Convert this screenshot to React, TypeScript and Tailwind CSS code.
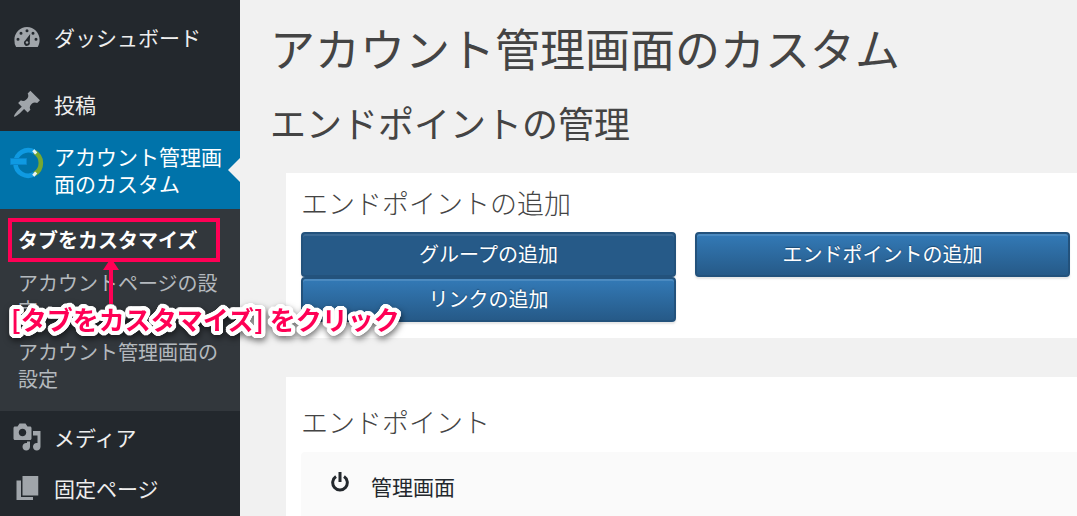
import type { ReactNode } from "react";

function DashboardIcon() {
  return (
    <svg viewBox="0 0 26 20" className="h-5 w-[26px]" aria-hidden="true">
      <path
        fill="#a0a5aa"
        fillRule="evenodd"
        d="M2.1 20A12.6 12.6 0 0 1 .4 13C.4 5.8 6 0 13 0s12.600 5.800 12.600 13c0 2.600-.7 5-1.900 7zM13 2.200a1.500 1.500 0 1 0 0 3 1.500 1.500 0 0 0 0-3zM7 4.700a1.500 1.500 0 1 0 0 3 1.500 1.500 0 0 0 0-3zm12 0a1.500 1.500 0 1 0 0 3 1.500 1.500 0 0 0 0-3zM4 10.800a1.500 1.500 0 1 0 0 3 1.500 1.500 0 0 0 0-3zm18 0a1.500 1.500 0 1 0 0 3 1.500 1.500 0 0 0 0-3zM16.200 7l-5 6.600a2.900 2.900 0 1 0 4.500 1.400z"
      />
      <circle cx="13" cy="15.500" r="1.300" fill="#a0a5aa" />
    </svg>
  );
}

function PinIcon() {
  return (
    <svg viewBox="0 0 20 20" className="size-[30px]" aria-hidden="true">
      <path
        fill="#a0a5aa"
        d="M10.440 3.020l1.820-1.820 6.360 6.350-1.830 1.820c-1.050-.68-2.480-.57-3.410.36l-.75.750c-.92.930-1.040 2.350-.35 3.410l-1.830 1.820-2.410-2.410-2.800 2.790c-.42.420-3.380 2.710-3.800 2.290s1.860-3.390 2.280-3.810l2.790-2.790L4.100 9.360l1.830-1.820c1.050.69 2.480.57 3.400-.36l.75-.75c.93-.92 1.050-2.350.36-3.410z"
      />
    </svg>
  );
}

function AccountIcon() {
  return (
    <svg viewBox="0 0 36 40" className="h-10 w-9" fill="none" aria-hidden="true">
      <path d="M25.500 9A12.700 12.700 0 1 0 25.500 31" stroke="#0f9ae2" strokeWidth="4.600" />
      <path d="M25.500 9A12.700 12.700 0 0 1 25.500 31" stroke="#76a832" strokeWidth="4.600" />
      <path d="M24.300 7.300l2.900 3.200M24.300 32.700l2.900-3.200" stroke="#eaf4f4" strokeWidth="3" />
      <path d="M1.500 15.500h16v6h-16z" fill="#0f9ae2" stroke="#0a86cc" />
    </svg>
  );
}

function MediaIcon() {
  return (
    <svg viewBox="0 0 20 20" className="size-[30px]" aria-hidden="true">
      <path
        fill="#a0a5aa"
        d="M13 11V4c0-.55-.45-1-1-1h-1.670L9 1H5L3.670 3H2c-.55 0-1 .45-1 1v7c0 .55.45 1 1 1h10c.55 0 1-.45 1-1zM7 4.500c1.380 0 2.500 1.120 2.500 2.500S8.380 9.500 7 9.500 4.500 8.380 4.500 7 5.620 4.500 7 4.500zM14 6h5v10.500c0 1.380-1.120 2.500-2.500 2.500S14 17.880 14 16.500s1.120-2.500 2.500-2.500c.17 0 .34.020.5.050V9h-3V6zm-4 8.050V13h2v3.500c0 1.380-1.120 2.500-2.500 2.500S7 17.880 7 16.500 8.120 14 9.500 14c.17 0 .34.020.5.050z"
      />
    </svg>
  );
}

function PagesIcon() {
  return (
    <svg viewBox="0 0 20 20" className="size-[30px]" aria-hidden="true">
      <path fill="#a0a5aa" d="M7 15V2h10.500v13H7zm-1 1h8v2H3V5h3v11z" />
    </svg>
  );
}

function MenuItem({
  icon,
  label,
  className,
}: {
  icon: ReactNode;
  label: string;
  className: string;
}) {
  return (
    <a href="#" className={`flex items-center text-[21px] leading-7 text-[#eee] ${className}`}>
      <span className="flex w-[54px] shrink-0 justify-center">{icon}</span>
      {label}
    </a>
  );
}

function AddButton({ label, active }: { label: string; active?: boolean }) {
  return (
    <button
      type="button"
      className={`h-[45px] rounded border-2 border-[#23527c] pb-px text-xl text-white [text-shadow:0_-1px_1px_#1d4a72] ${
        active
          ? "bg-[#265a88] shadow-[inset_0_2px_0_#3c6a94,0_2px_2px_#0000001a]"
          : "bg-linear-to-b from-[#337ab7] to-[#265a88] shadow-[inset_0_2px_0_#4b8ac0,0_2px_2px_#0000001a]"
      }`}
    >
      {label}
    </button>
  );
}

const subItems = ["アカウントページの設定", "アカウント管理画面の設定"];

function Sidebar() {
  return (
    <nav className="w-60 shrink-0 bg-[#23282d]">
      <MenuItem icon={<DashboardIcon />} label="ダッシュボード" className="h-[74px]" />
      <MenuItem icon={<PinIcon />} label="投稿" className="h-[57px] pt-[3px]" />
      <div className="relative">
        <a
          href="#"
          className="flex h-[78px] bg-[#0073aa] pt-3 text-[21px] leading-[27px] text-white"
        >
          <span className="flex w-[54px] shrink-0 justify-center">
            <AccountIcon />
          </span>
          <span className="w-[172px]">アカウント管理画面のカスタム</span>
        </a>
        <span className="absolute top-[27px] right-0 border-y-12 border-r-12 border-y-transparent border-r-[#f1f1f1]" />
      </div>
      <div className="bg-[#32373c] px-[18px] pt-[9px] pb-[19px] text-[20px] leading-[27px] text-[#b4b9be]">
        <div className="relative -mb-2 -ml-[10px] flex h-11 w-[212px] items-center border-4 border-[#ff0055] px-[6px] pb-px">
          <a href="#" className="font-bold whitespace-nowrap text-white">
            タブをカスタマイズ
          </a>
          <Annotation />
        </div>
        {subItems.map((item) => (
          <a key={item} href="#" className="mt-[15px] block break-all">
            {item}
          </a>
        ))}
      </div>
      <MenuItem icon={<MediaIcon />} label="メディア" className="h-[51px]" />
      <MenuItem icon={<PagesIcon />} label="固定ページ" className="h-[51px]" />
    </nav>
  );
}

// Round white outline, built from shadows set on a circle round the glyphs
const outline = Array.from({ length: 32 }, (_, i) => {
  const angle = (i * Math.PI) / 16;
  return `${(4 * Math.cos(angle)).toFixed(2)}px ${(4 * Math.sin(angle)).toFixed(2)}px 0 #fff`;
})
  .concat("2px 0 0 #fff", "-2px 0 0 #fff", "0 2px 0 #fff", "0 -2px 0 #fff")
  .join(", ");

// Callout under the highlighted submenu entry
function Annotation() {
  return (
    <div className="absolute top-full -left-px z-10 text-[#ff0055]">
      <svg viewBox="0 0 16 46" className="ml-[92px] h-[46px] w-4" aria-hidden="true">
        <path fill="currentColor" d="M8 0l8 12h-6v34H6V12H0z" />
      </svg>
      <p
        className="-mt-1 text-[26px] leading-[38px] font-bold whitespace-nowrap drop-shadow-[1px_3px_3px_#0008]"
        style={{ textShadow: outline }}
      >
        [タブをカスタマイズ] をクリック
      </p>
    </div>
  );
}

export default function App() {
  return (
    <div className="flex h-screen overflow-hidden bg-[#f1f1f1] font-['Noto_Sans_CJK_JP',sans-serif] text-[#444]">
      <Sidebar />
      <main className="min-w-0 flex-1 pt-[18px] pl-[30px]">
        <h1 className="text-[45px] leading-[60px]">アカウント管理画面のカスタム</h1>
        <h2 className="mt-5 text-[36px] leading-[48px]">エンドポイントの管理</h2>
        <section className="mt-[27px] ml-4 bg-white pt-3 pr-[7px] pb-4 pl-[15px]">
          <h3 className="text-[27px] leading-9 font-light">エンドポイントの追加</h3>
          <div className="mt-[11px] grid grid-cols-2 gap-x-[19px]">
            <AddButton label="グループの追加" active />
            <AddButton label="エンドポイントの追加" />
            <AddButton label="リンクの追加" />
          </div>
        </section>
        <section className="mt-[39px] ml-4 bg-white pt-[27px] pb-4 pl-[15px]">
          <h3 className="text-[27px] leading-9 font-light">エンドポイント</h3>
          <div className="mt-3 flex h-[90px] items-start rounded-l bg-[#fafafa] pt-5 pl-[30px] text-[21px] leading-7 text-[#23282d]">
            <svg viewBox="0 0 18 20" className="h-5 w-[18px]" fill="none" stroke="currentColor" strokeWidth="3" aria-hidden="true">
              <path d="M5 4.500a7.300 7.300 0 1 0 8 0M9 0v10" />
            </svg>
            <span className="ml-[22px]">管理画面</span>
          </div>
        </section>
      </main>
    </div>
  );
}
